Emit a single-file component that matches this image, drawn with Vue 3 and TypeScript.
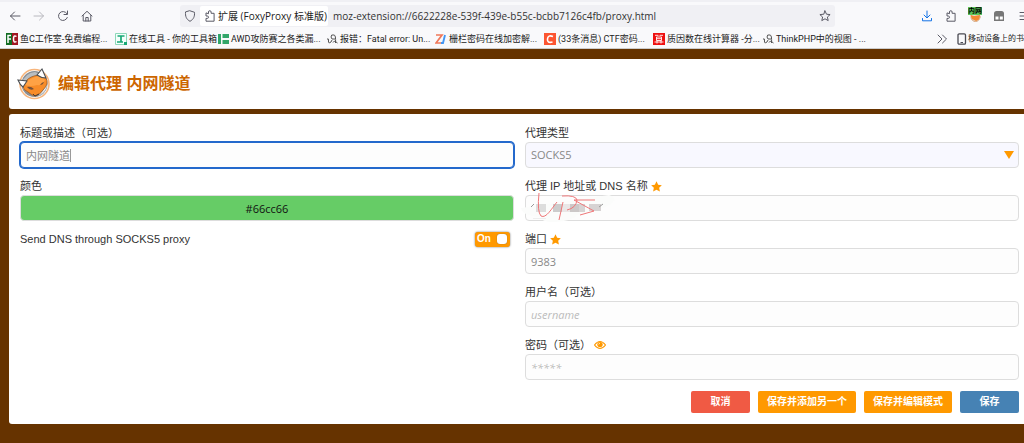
<script setup lang="ts">
import { ref } from 'vue'

interface Bookmark {
  icon: 'fc' | 'tool' | 'bars' | 'sketch' | 'zi' | 'c' | 'calc'
  text: string
  narrow?: boolean
}

const bookmarks: Bookmark[] = [
  { icon: 'fc', text: '鱼C工作室-免费编程...' },
  { icon: 'tool', text: '在线工具 - 你的工具箱', narrow: true },
  { icon: 'bars', text: 'AWD攻防赛之各类漏...' },
  { icon: 'sketch', text: '报错：Fatal error: Un...' },
  { icon: 'zi', text: '栅栏密码在线加密解...' },
  { icon: 'c', text: '(33条消息) CTF密码...' },
  { icon: 'calc', text: '质因数在线计算器 -分...' },
  { icon: 'sketch', text: 'ThinkPHP中的视图 - ...' },
]

const address = ref('moz-extension://6622228e-539f-439e-b55c-bcbb7126c4fb/proxy.html')
const title = ref('内网隧道')
const color = ref('#66cc66')
const dns = ref(true)
const proxyType = ref('SOCKS5')
const host = ref('')
const port = ref('9383')
const username = ref('')
const password = ref('')
</script>

<template>
  <div class="window">
    <header class="browser">
      <div class="tabstrip"></div>
      <nav class="toolbar" aria-label="Navigation">
        <div class="nav-buttons">
          <button type="button" aria-label="Back">
            <svg viewBox="0 0 12 12"><path d="M11 6H1.500M5.500 2 1.500 6l4 4" /></svg>
          </button>
          <button type="button" aria-label="Forward" disabled>
            <svg viewBox="0 0 12 12"><path d="M1 6h9.500M6.500 2l4 4-4 4" /></svg>
          </button>
          <button type="button" aria-label="Reload">
            <svg viewBox="0 0 12 12"><path d="M10.300 7.500A4.500 4.500 0 1 1 9.800 3.500M10.500 1v3.500H7" /></svg>
          </button>
          <button type="button" aria-label="Home">
            <svg viewBox="0 0 12 12"><path d="M1 6 6 1.300 11 6M2.200 5.500V11h7.600V5.500M4.800 11V7.500h2.400V11" /></svg>
          </button>
        </div>
        <div class="urlbar">
          <svg class="shield" viewBox="0 0 12 12"><path d="M6 .8 10.500 2.300c.3 4-.8 7-4.500 9-3.700-2-4.800-5-4.500-9z" /></svg>
          <span class="identity">
            <svg viewBox="0 0 12 12"><path d="M4.500 3.300V2a1.300 1.300 0 0 1 2.600 0v1.300h3v7.900H2V8.400h1.300a1.200 1.200 0 0 0 0-2.400H2V3.300z" /></svg>
            <span>扩展 (FoxyProxy 标准版)</span>
          </span>
          <input v-model="address" class="address" type="text" aria-label="Address" />
          <button type="button" aria-label="Bookmark this page">
            <svg viewBox="0 0 12 12"><path d="m6 .9 1.500 3.300 3.600.4-2.700 2.400.8 3.600L6 8.800l-3.200 1.800.8-3.600L.9 4.600l3.600-.4z" /></svg>
          </button>
        </div>
        <div class="tools">
          <button type="button" class="download" aria-label="Downloads">
            <svg viewBox="0 0 12 12"><path d="M6 1v6.500M3 5l3 3 3-3M1.500 8.500v2.300h9V8.500" /></svg>
          </button>
          <button type="button" aria-label="Extensions">
            <svg viewBox="0 0 12 12"><path d="M4.500 3.300V2a1.300 1.300 0 0 1 2.600 0v1.300h3v7.900H2V8.400h1.300a1.200 1.200 0 0 0 0-2.400H2V3.300z" /></svg>
          </button>
          <button type="button" class="foxy" aria-label="FoxyProxy">
            <svg viewBox="0 0 12 12"><circle cx="6.500" cy="7" r="4.500" fill="#e5dcd5" stroke="#d9a67c" /><path d="m1.500 5 3.500 1 6-1-1 4.500L7 11 3 9z" fill="#f28a32" stroke="none" /></svg>
            <span class="badge">内网</span>
          </button>
          <button type="button" aria-label="Containers">
            <svg viewBox="0 0 12 12"><path d="M1 11V3.500Q1 1 3.500 1h5Q11 1 11 3.500V11z" fill="#777" stroke="none" /><path d="M2.500 6.500h3v3h-3zM6.800 6.500h3v3h-3z" fill="#fff" stroke="none" /></svg>
          </button>
          <button type="button" class="menu" aria-label="Menu">
            <svg viewBox="0 0 12 12"><path d="M3 2.500h9M3 6h9M3 9.500h9" /></svg>
          </button>
        </div>
      </nav>
      <nav class="bookmarks" aria-label="Bookmarks">
        <a v-for="item in bookmarks" :key="item.text" href="#" :class="{ narrow: item.narrow }">
          <svg v-if="item.icon === 'fc'" viewBox="0 0 12 12"><path d="M0 0h6v12H0z" fill="#126c22" /><path d="M6 0h6v12H6z" fill="#a01622" /><path d="M5 2.500H2V10M2 6h3M10.500 3.500q-3-2-3 2.500t3 2.500" fill="none" stroke="#fff" stroke-width="1.500" /></svg>
          <svg v-else-if="item.icon === 'tool'" viewBox="0 0 12 12"><path d="M.5.5h11v11H.5z" fill="#f4fffb" stroke="#8cd9b9" /><path d="M2.500 3h7M6 3v6M2 9h6" fill="none" stroke="#18a875" stroke-width="1.700" /><path d="M9 9h3v3H9z" fill="#18a875" /></svg>
          <svg v-else-if="item.icon === 'bars'" viewBox="0 0 12 12"><path d="M1 1h3v10H1zM5.500 1H12v4H5.500zM5.500 7H12v4H5.500z" fill="#32a66a" /></svg>
          <svg v-else-if="item.icon === 'sketch'" viewBox="0 0 12 12"><path d="M1 6q2-1 1.500 2T5 9l1-2M9 6Q5 7 5 4t3-2q2 0 1.500 8M7 9.500q1-2.500 4.500.5" fill="none" stroke="#555" /></svg>
          <svg v-else-if="item.icon === 'zi'" viewBox="0 0 12 12"><path d="M1 2h6L1 10h5" fill="none" stroke="#f0785a" stroke-width="1.700" /><path d="M6 10h2l2-8" fill="none" stroke="#4296f4" stroke-width="1.900" /></svg>
          <svg v-else-if="item.icon === 'c'" viewBox="0 0 12 12"><path d="M0 0h12v12H0z" fill="#fc5531" /><path d="M9 3.500Q4 1.500 3.500 6T8.500 9" fill="none" stroke="#fff" stroke-width="1.600" /></svg>
          <svg v-else viewBox="0 0 12 12"><path d="M0 0h12v12H0z" fill="#e11" /><path d="M2 2.300h3.500M6.500 2.300H10M3.500 4h5v3.500h-5zM3.500 5.700h5M1.500 9h9M4 7.500v3M8 7.500v3" fill="none" stroke="#fff" stroke-width=".9" /></svg>
          <span>{{ item.text }}</span>
        </a>
        <button type="button" class="more" aria-label="More bookmarks">
          <svg viewBox="0 0 12 12"><path d="m2 2 4 4-4 4M6.500 2l4 4-4 4" /></svg>
        </button>
        <a href="#" class="mobile">
          <svg viewBox="0 0 12 12"><rect x="2" y=".8" width="7.500" height="10.400" rx="1.200" fill="none" stroke="#4a4a52" stroke-width="1.300" /><path d="M4.500 9.500H7" stroke="#4a4a52" /></svg>
          <span>移动设备上的书</span>
        </a>
      </nav>
    </header>

    <main class="page">
      <section class="card heading">
        <svg class="logo" viewBox="0 0 34 34">
          <circle cx="17.500" cy="17" r="14.500" fill="#fff" stroke="#f7b57c" stroke-width="1.600" />
          <circle cx="17.500" cy="17" r="13" fill="#8b9095" />
          <path d="M5 16q3-10 13-11l11 5 1 10q-2 6-7 9L6 22z" fill="#b9bdc0" />
          <path d="M22 28q7-3 8-11l-4 7z" fill="#eceeef" />
          <path d="M9 14q4-5 13-6l6 2q3 3 2 7-1 3-4 6-3 5-8 6-4-1-7-4-5-2-5-6z" fill="#f78c29" stroke="#8c5526" stroke-width=".7" />
          <path d="M10 14q6-4 12-5 4 1 6 4-3 6-8 5-6 2-12 0z" fill="#ffa245" />
          <path d="m1 13 9 1-4 6q-3-2-5-7z" fill="#fff" stroke="#4b4f53" stroke-width="1.100" />
          <path d="m20 8 5-6 4 9q-5 0-9-3z" fill="#fff" stroke="#4b4f53" stroke-width="1.100" />
          <path d="M10 20q4-1 7 2-4 2-7-2zM23 18q2-3 4-3-1 3-4 3z" fill="#765038" />
          <path d="m16 27 2 2 4-2" fill="none" stroke="#4c3b31" />
        </svg>
        <h1>编辑代理 内网隧道</h1>
      </section>

      <form class="card form" @submit.prevent>
        <div class="column">
          <div class="field">
            <label for="title">标题或描述（可选）</label>
            <div class="title-wrap">
              <input id="title" v-model="title" class="title" type="text" />
              <span class="caret"></span>
            </div>
          </div>
          <div class="field">
            <label for="color">颜色</label>
            <input id="color" v-model="color" class="color" type="text" />
          </div>
          <div class="dns">
            <label for="dns">Send DNS through SOCKS5 proxy</label>
            <span class="switch">
              <input id="dns" v-model="dns" type="checkbox" />
              <span class="on">On</span>
              <span class="knob"></span>
            </span>
          </div>
        </div>

        <div class="column">
          <div class="field">
            <label for="type">代理类型</label>
            <div class="select">
              <select id="type" v-model="proxyType"><option>SOCKS5</option></select>
              <svg viewBox="0 0 10 8"><path d="M0 0h10L5 8z" /></svg>
            </div>
          </div>
          <div class="field">
            <label for="host">代理 IP 地址或 DNS 名称<svg class="star" viewBox="0 0 12 12"><path d="m6 .3 1.800 3.700 4 .5-2.900 2.800.8 4.100L6 9.500l-3.700 1.900.8-4.100L.2 4.500l4-.5z" /></svg></label>
            <div class="host">
              <input id="host" v-model="host" type="text" />
              <svg class="scribble" viewBox="0 0 110 40" aria-hidden="true">
                <path d="M2 18 90 5q12 4-3 12-14 6-29 8-5 6-22 7-16 0-12-5-20 0-22-9z" fill="#fbfcfb" />
                <path d="M17 14h10v8H17z" fill="#ddd" /><path d="M34 14h9v8h-9z" fill="#ccc" /><path d="M43 14h8v8h-8z" fill="#eae7e7" /><path d="M51 14h9v8h-9z" fill="#ccc8c8" /><path d="M60 14h6v8h-6zM70 14h12v7H70z" fill="#d7d3d3" />
                <path d="m12 17 3-3M80 17l4-3" stroke="#999" />
                <path d="M14 28.500h13" stroke="#eee" />
                <path d="M20 3q-2 19 2 23c5 3 11-8 16-14M44 12l-4 18M43 6q14-1 15 4-1 8-10 10M76 10H55l20 11-14 4" fill="none" stroke="#ef7779" />
              </svg>
            </div>
          </div>
          <div class="field">
            <label for="port">端口<svg class="star" viewBox="0 0 12 12"><path d="m6 .3 1.800 3.700 4 .5-2.900 2.800.8 4.100L6 9.500l-3.700 1.900.8-4.100L.2 4.500l4-.5z" /></svg></label>
            <input id="port" v-model="port" type="text" />
          </div>
          <div class="field">
            <label for="username">用户名（可选）</label>
            <input id="username" v-model="username" type="text" placeholder="username" />
          </div>
          <div class="field">
            <label for="password">密码（可选）<svg class="eye" viewBox="0 0 12 10"><path d="M.5 5q5.500-7 11 0-5.500 7-11 0z" fill="none" stroke="#f90" stroke-width="1.200" /><circle cx="6" cy="4.600" r="2.700" fill="#f90" /><path d="M4.700 4.500Q4.800 3.300 6 3.200" fill="none" stroke="#fff" stroke-width=".7" /></svg></label>
            <input id="password" v-model="password" type="password" placeholder="*****" />
          </div>
        </div>

        <div class="actions">
          <button type="button" class="cancel">取消</button>
          <button type="button" class="add">保存并添加另一个</button>
          <button type="button" class="patterns">保存并编辑模式</button>
          <button type="submit" class="save">保存</button>
        </div>
      </form>
    </main>
  </div>
</template>

<style>
html {
  background: #630;
}
body {
  margin: 0;
}
</style>

<style scoped>
* {
  box-sizing: border-box;
}
.window {
  overflow: hidden;
  color: #333;
  font: 11px/18px "Liberation Sans", "Noto Sans CJK SC", sans-serif;
}
button,
input,
select {
  margin: 0;
  font: inherit;
}
svg {
  flex: none;
}
.browser {
  background: #f9f9fb;
  border-bottom: 1px solid #ccc;
  font-family: "Open Sans", "Noto Sans CJK SC", sans-serif;
}
.browser button {
  display: flex;
  padding: 0;
  border: 0;
  background: none;
}
.browser button svg,
.shield,
.identity svg {
  width: 12px;
  height: 12px;
  fill: none;
  stroke: #5b5b66;
  stroke-width: 1;
  stroke-linejoin: round;
  stroke-linecap: round;
}
.tabstrip {
  height: 2px;
  background: #f0f0f4;
}
.toolbar {
  display: flex;
  align-items: center;
  height: 28px;
  padding-left: 9px;
}
.nav-buttons {
  display: flex;
  gap: 12px;
  width: 171px;
}
.nav-buttons button:disabled {
  opacity: 0.4;
}
.urlbar {
  display: flex;
  align-items: center;
  flex: 1;
  height: 22px;
  padding: 0 4px;
  border-radius: 3px;
  background: #f0f0f4;
}
.identity {
  display: flex;
  align-items: center;
  gap: 2px;
  width: 128px;
  height: 20px;
  margin-left: 4px;
  padding-left: 4px;
  border-radius: 2px;
  background: #fff;
  color: #222;
  font-size: 10px;
  white-space: nowrap;
}
.address {
  flex: 1;
  min-width: 0;
  padding: 0 0 0 5px;
  border: 0;
  outline: 0;
  background: none;
  color: #333;
  font-size: 10px;
}
.tools {
  display: flex;
  gap: 12px;
  flex: none;
  width: 189px;
  padding-left: 86px;
}
.browser .download svg {
  stroke: #1473e6;
}
.foxy {
  position: relative;
}
.badge {
  position: absolute;
  top: -3px;
  left: -1px;
  width: 14px;
  overflow: hidden;
  background: #5bc85b;
  color: #000;
  font-size: 7px;
  font-weight: bold;
  line-height: 8px;
  white-space: nowrap;
}
.bookmarks {
  display: flex;
  align-items: center;
  height: 18px;
  padding-left: 6px;
  font-family: Roboto, "Noto Sans CJK SC", sans-serif;
  font-size: 9px;
}
.bookmarks a {
  display: flex;
  align-items: center;
  flex: none;
  gap: 2px;
  width: 109px;
  color: #222;
  text-decoration: none;
  white-space: nowrap;
}
.bookmarks a.narrow {
  width: 102px;
}
.bookmarks a svg {
  width: 12px;
  height: 12px;
}
.bookmarks .more {
  margin-left: auto;
}
.bookmarks a.mobile {
  width: 68px;
  margin-left: 8px;
  gap: 0;
  font-size: 8px;
}
.page {
  display: grid;
  gap: 5px;
  padding: 10px 0 20px 9px;
  background: #630;
}
.card {
  border-radius: 3px 0 0 3px;
  background: #fff;
}
.heading {
  display: flex;
  align-items: center;
  gap: 7px;
  height: 50px;
  padding-left: 8px;
}
.logo {
  width: 34px;
  height: 34px;
}
h1 {
  margin: 0;
  color: #cc6600;
  font-size: 16px;
  line-height: 24px;
}
.form {
  display: grid;
  grid-template-columns: 1fr 1fr;
  gap: 11px;
  padding: 10px 5px 11px 11px;
}
.column {
  display: flex;
  flex-direction: column;
  gap: 9px;
  min-width: 0;
}
.field label {
  display: flex;
  align-items: center;
  gap: 3px;
  height: 18px;
}
.field input,
.field select {
  display: block;
  width: 100%;
  height: 26px;
  padding: 0 5px;
  border: 1px solid #ddd;
  border-radius: 4px;
  outline: 0;
  background: #fdfdfd;
  color: #888;
  font-family: "Open Sans", "Noto Sans CJK SC", sans-serif;
  font-size: 11px;
}
.field input::placeholder {
  color: #bbb;
  font-style: italic;
}
.field .title {
  border-color: #2469cc;
  box-shadow: 0 0 0 1px #2469cc;
}
.caret {
  position: absolute;
  top: 7px;
  left: 50px;
  width: 1px;
  height: 13px;
  background: #999;
}
.field .color {
  background: #6c6;
  color: #111;
  text-align: center;
}
.dns {
  display: flex;
  align-items: center;
  justify-content: space-between;
  padding-right: 4px;
}
.switch {
  position: relative;
  display: flex;
  align-items: center;
  justify-content: space-between;
  width: 35px;
  height: 15px;
  padding: 0 3px 0 2px;
  border-radius: 3px;
  background: #f90;
  box-shadow: 0 0 2px #666;
  color: #fff;
  font-size: 10px;
  font-weight: bold;
}
.switch input {
  position: absolute;
  inset: 0;
  width: 100%;
  height: 100%;
  opacity: 0;
}
.knob {
  width: 10px;
  height: 10px;
  border-radius: 3px;
  background: #fff;
  box-shadow: 0 0 1px #555;
}
.title-wrap,
.select,
.host {
  position: relative;
}
.field select {
  appearance: none;
  background: #f8f8ff;
}
.select svg {
  position: absolute;
  top: 9px;
  right: 5px;
  width: 10px;
  height: 8px;
  fill: #f90;
  pointer-events: none;
}
.scribble {
  position: absolute;
  top: -5px;
  left: -6px;
  width: 110px;
  height: 40px;
  pointer-events: none;
}
.star {
  width: 11px;
  height: 11px;
  fill: #f90;
}
.eye {
  width: 12px;
  height: 10px;
}
.actions {
  grid-column: 1 / -1;
  display: flex;
  justify-content: flex-end;
  gap: 8px;
}
.actions button {
  min-width: 59px;
  height: 22px;
  padding: 0 9px;
  border: 0;
  border-radius: 2px;
  color: #fff;
  font-size: 10px;
  font-weight: bold;
  line-height: 22px;
}
.actions .cancel {
  background: #f05a44;
}
.actions .add,
.actions .patterns {
  background: #f90;
}
.actions .save {
  background: #4682b4;
}
</style>
